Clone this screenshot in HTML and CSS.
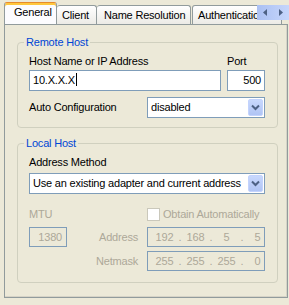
FILE: index.html
```html
<!DOCTYPE html>
<html lang="en">
<head>
  <meta charset="UTF-8">
  <title>General</title>
  <link rel="stylesheet" href="styles.css">
</head>
<body>

  <!-- Tab strip -->
  <div class="tabs">
    <div class="tab tab-active">General</div>
    <div class="tab tab-client">Client</div>
    <div class="tab tab-name">Name Resolution</div>
    <div class="tab tab-auth">Authentication</div>
    <div class="tab-scroll">
      <span class="scroll-btn">
        <svg width="16" height="15" viewBox="0 0 16 15"><path d="M10 4 L6 7.5 L10 11 Z" fill="#4d6185"/></svg>
      </span>
      <span class="scroll-btn">
        <svg width="16" height="15" viewBox="0 0 16 15"><path d="M6 4 L10 7.5 L6 11 Z" fill="#4d6185"/></svg>
      </span>
    </div>
  </div>

  <!-- Tab page -->
  <div class="panel">

    <fieldset class="group group-remote">
      <legend>Remote Host</legend>
      <div class="host-grid">
        <span class="label">Host Name or IP Address</span>
        <span class="label">Port</span>
        <div class="textbox">10.X.X.X<span class="caret"></span></div>
        <div class="textbox textbox-right">500</div>
      </div>
      <div class="auto-row">
        <span class="label auto-label">Auto Configuration</span>
        <div class="combo">
          <span class="combo-text">disabled</span>
          <span class="combo-btn">
            <svg width="9" height="7" viewBox="0 0 9 7"><polyline points="1,1.5 4.5,5 8,1.5" fill="none" stroke="#4d6185" stroke-width="2"/></svg>
          </span>
        </div>
      </div>
    </fieldset>

    <fieldset class="group group-local">
      <legend>Local Host</legend>
      <span class="label">Address Method</span>
      <div class="combo combo-wide">
        <span class="combo-text">Use an existing adapter and current address</span>
        <span class="combo-btn">
          <svg width="9" height="7" viewBox="0 0 9 7"><polyline points="1,1.5 4.5,5 8,1.5" fill="none" stroke="#4d6185" stroke-width="2"/></svg>
        </span>
      </div>

      <div class="local-grid">
        <span class="label disabled">MTU</span>
        <span></span>
        <div class="check-row">
          <span class="checkbox"></span>
          <span class="label disabled">Obtain Automatically</span>
        </div>

        <div class="box box-mtu">1380</div>
        <span class="label disabled side-label">Address</span>
        <div class="box ip">
          <span class="seg">192</span><span class="dot">.</span><span class="seg">168</span><span class="dot">.</span><span class="seg">5</span><span class="dot">.</span><span class="seg">5</span>
        </div>

        <span></span>
        <span class="label disabled side-label side-mask">Netmask</span>
        <div class="box ip ip-mask">
          <span class="seg">255</span><span class="dot">.</span><span class="seg">255</span><span class="dot">.</span><span class="seg">255</span><span class="dot">.</span><span class="seg">0</span>
        </div>
      </div>
    </fieldset>

  </div>

</body>
</html>
```

FILE: styles.css
```css
/* General Styles */
* {
  padding: 0;
  margin: 0;
  box-sizing: border-box;
}

body {
  font-family: 'Liberation Sans', Arial, sans-serif;
  font-size: 11px;
  line-height: 13px;
  letter-spacing: -0.2px;
  color: #000;
  background: #ece9d8;
  width: 289px;
  height: 305px;
  overflow: hidden;
}

/* Tab strip */
.tabs {
  position: relative;
  display: flex;
  align-items: flex-end;
  height: 24px;
  padding-left: 4px;
  overflow: hidden;
}

.tab {
  flex: none;
  height: 19px;
  padding-top: 3px;
  border: 1px solid #919b9c;
  border-bottom: none;
  border-radius: 3px 3px 0 0;
  background: linear-gradient(#ffffff, #ecebe6);
  white-space: nowrap;
}

.tab-active {
  position: relative;
  z-index: 1;
  width: 53px;
  height: 23px;
  margin-bottom: -1px;
  padding-left: 9px;
  border-top: 1px solid #e68b2c;
  box-shadow: inset 0 2px 0 #ffc73c;
  background: #fcfcfe;
}

.tab-client {
  width: 40px;
  padding-left: 5px;
  border-left: none;
}

.tab-name {
  width: 94px;
  padding-left: 7px;
  border-left: none;
}

.tab-auth {
  width: 90px;
  padding-left: 5px;
  margin-left: 1px;
}

.tab-scroll {
  position: absolute;
  top: 5px;
  right: 0;
  display: flex;
  width: 32px;
  height: 15px;
  background: linear-gradient(to right, #aac0f3, #c6d6fb);
  z-index: 2;
}

.scroll-btn {
  display: block;
  width: 16px;
  height: 15px;
}

.scroll-btn svg {
  display: block;
}

/* Tab page */
.panel {
  width: 284px;
  height: 274px;
  margin-left: 4px;
  border: 1px solid #919b9c;
  box-shadow: inset -1px -1px 0 #d6d3c6;
}

.group {
  margin: 0 9px 0 12px;
  padding: 6px 12px 9px 11px;
  border: 1px solid #d0d0bf;
  border-radius: 4px;
  min-width: 0;
}

.group legend {
  margin-left: -5px;
  padding: 0 2px;
  color: #0046d5;
  line-height: 13px;
}

.group-remote {
  margin-top: 11px;
}

.group-local {
  margin-top: 9px;
  padding-bottom: 11px;
}

.label {
  display: block;
  white-space: nowrap;
}

.disabled {
  color: #aca899;
}

/* Remote host */
.host-grid {
  display: grid;
  grid-template-columns: 1fr 38px;
  column-gap: 6px;
}

.textbox {
  height: 21px;
  margin-top: 2px;
  padding: 0 3px;
  line-height: 19px;
  background: #fff;
  border: 1px solid #7f9db9;
  white-space: nowrap;
}

.textbox-right {
  text-align: right;
}

.caret {
  display: inline-block;
  width: 1px;
  height: 13px;
  margin-left: 1px;
  vertical-align: -2px;
  background: #000;
}

.auto-row {
  display: flex;
  align-items: center;
  margin-top: 6px;
}

.auto-label {
  width: 118px;
}

.combo {
  display: flex;
  align-items: center;
  flex: 1;
  height: 21px;
  background: #fff;
  border: 1px solid #7f9db9;
}

.combo-wide {
  margin-top: 4px;
}

.combo-text {
  flex: 1;
  padding-left: 3px;
  white-space: nowrap;
  overflow: hidden;
}

.combo-btn {
  display: flex;
  align-items: center;
  justify-content: center;
  width: 15px;
  height: 17px;
  margin-right: 1px;
  border: 1px solid #c3d3fd;
  border-radius: 2px;
  background: linear-gradient(#c8d8fd, #b0c4f4);
}

/* Local host */
.local-grid {
  display: grid;
  grid-template-columns: 38px 80px 118px;
  align-items: center;
  margin-top: 13px;
}

.check-row {
  display: flex;
  align-items: center;
  height: 14px;
}

.checkbox {
  width: 13px;
  height: 13px;
  margin: 1px 3px 0 0;
  border: 1px solid #cac8bb;
  background: #fff;
}

.box {
  height: 20px;
  line-height: 18px;
  border: 1px solid #7f9db9;
  color: #aca899;
  white-space: nowrap;
}

.box-mtu {
  margin-top: 6px;
  padding-right: 4px;
  text-align: right;
}

.side-label {
  margin-top: 6px;
  padding-right: 9px;
  text-align: right;
}

.side-mask {
  margin-top: 4px;
}

.ip {
  display: flex;
  margin-top: 6px;
  padding-left: 4px;
  overflow: hidden;
}

.ip-mask {
  margin-top: 4px;
}

.seg {
  flex: none;
  width: 25px;
  text-align: center;
}

.dot {
  flex: none;
  width: 6px;
  text-align: center;
}
```
